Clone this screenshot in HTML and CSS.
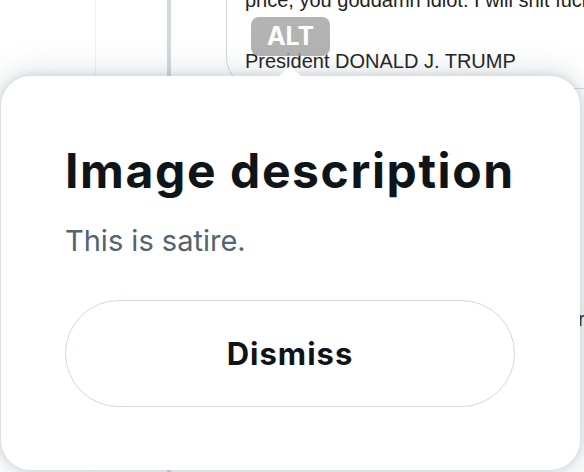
FILE: index.html
```html
<!DOCTYPE html>
<html lang="en">
<head>
    <meta charset="UTF-8">
    <meta name="viewport" content="width=device-width, initial-scale=1.0">
    <title>Image description</title>
    <link rel="stylesheet" href="styles.css">
</head>
<body>
    <div class="timeline">
        <div class="col-left"></div>
        <div class="col-avatar"><div class="thread-line"></div></div>
        <div class="col-content">
            <div class="media">
                <p class="media-line">price, you goddamn idiot. I will shit fuck you up</p>
                <p class="media-line">President DONALD J. TRUMP</p>
                <span class="alt-badge">ALT</span>
            </div>
            <div class="under-text">r</div>
        </div>
    </div>

    <div class="popover">
        <div class="caret"></div>
        <h1>Image description</h1>
        <p class="alt-text">This is satire.</p>
        <button class="dismiss">Dismiss</button>
    </div>
</body>
</html>
```

FILE: styles.css
```css
html, body {
    margin: 0;
    padding: 0;
}
body {
    width: 584px;
    height: 472px;
    overflow: hidden;
    position: relative;
    background-color: #fff;
    font-family: Inter, "Noto Sans", sans-serif;
    color: #0f1419;
}

/* background timeline */
.timeline {
    display: flex;
    height: 472px;
}
.col-left {
    width: 95px;
    flex: none;
    border-right: 1px solid #eff3f4;
}
.col-avatar {
    width: 130px;
    flex: none;
    padding-left: 71px;
    box-sizing: border-box;
}
.thread-line {
    width: 4px;
    height: 100%;
    background-color: #cfd9de;
}
.col-content {
    flex: 1;
    min-width: 0;
}
.media {
    position: relative;
    width: 420px;
    height: 120px;
    margin-top: -31px;
    padding-left: 18px;
    box-sizing: border-box;
    border: 1px solid #cfd9de;
    border-radius: 0 0 0 32px;
    font-family: "Liberation Sans", Arial, sans-serif;
    font-size: 20px;
    line-height: 30px;
    color: #222;
    white-space: nowrap;
}
.media-line {
    margin: 0 0 31px;
}
.media-line:first-child {
    margin-top: 15px;
}
.alt-badge {
    position: absolute;
    left: 24px;
    top: 47px;
    width: 79px;
    height: 39px;
    border-radius: 8px;
    background-color: rgba(160, 160, 160, 0.8);
    color: #fff;
    font-family: Inter, sans-serif;
    font-weight: 700;
    font-size: 25px;
    line-height: 39px;
    text-align: center;
}
.under-text {
    margin-top: 218px;
    padding-left: 352px;
    font-family: "Liberation Sans", Arial, sans-serif;
    font-size: 21px;
    color: #222;
}

/* popover */
.popover {
    position: absolute;
    left: 1px;
    top: 76px;
    width: 579px;
    height: 394px;
    box-sizing: border-box;
    padding: 67px 65px 0 64px;
    background-color: #fff;
    border-radius: 30px;
    box-shadow: 0 0 32px rgba(101, 119, 134, 0.3), 0 0 6px 2px rgba(101, 119, 134, 0.15);
}
.caret {
    position: absolute;
    left: 277px;
    top: -10px;
    width: 24px;
    height: 11px;
    background-color: #fff;
    clip-path: polygon(50% 0, 100% 100%, 0 100%);
}
h1 {
    margin: 0;
    font-size: 48px;
    line-height: 56px;
    font-weight: 700;
    letter-spacing: 1.6px;
    color: #0f1419;
}
.alt-text {
    margin: 22px 0 0;
    font-size: 29px;
    line-height: 40px;
    color: #536471;
}
.dismiss {
    display: flex;
    align-items: center;
    justify-content: center;
    width: 450px;
    height: 107px;
    margin-top: 39px;
    padding: 0;
    background-color: #fff;
    border: 1px solid #cfd9de;
    border-radius: 999px;
    font-family: Inter, sans-serif;
    font-size: 31px;
    font-weight: 700;
    letter-spacing: 1px;
    color: #0f1419;
    cursor: pointer;
}
```
